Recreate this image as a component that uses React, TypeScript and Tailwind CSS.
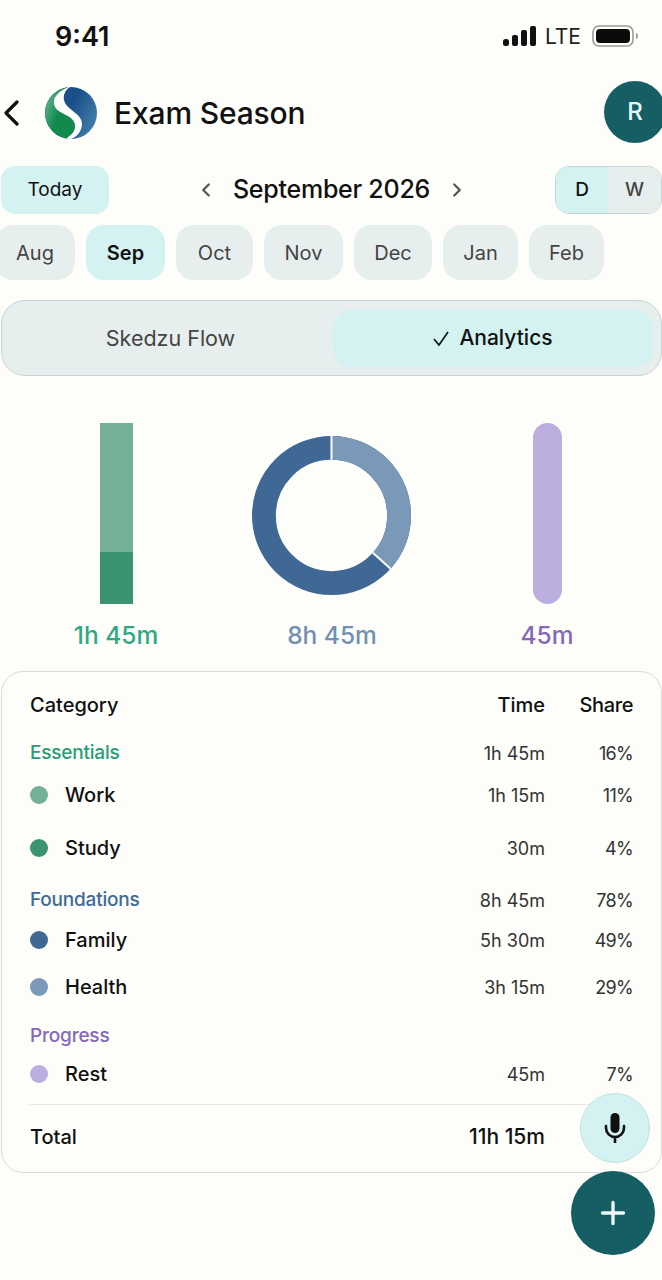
import React from 'react';
import { ChevronLeft, ChevronRight, Plus } from 'lucide-react';

const months = [
  { label: 'Aug', w: 'w-[80px]' },
  { label: 'Sep', w: 'w-[79px]', active: true },
  { label: 'Oct', w: 'w-[77px]' },
  { label: 'Nov', w: 'w-[79px]' },
  { label: 'Dec', w: 'w-[78px]' },
  { label: 'Jan', w: 'w-[75px]' },
  { label: 'Feb', w: 'w-[75px]' },
];

type Row = {
  name: string;
  time?: string;
  share?: string;
  h: string;
  dot?: string;
  heading?: string;
};

const rows: Row[] = [
  { name: 'Essentials', time: '1h 45m', share: '16%', h: 'h-[48px] pt-[2px]', heading: 'text-[#2a9d78]' },
  { name: 'Work', time: '1h 15m', share: '11%', h: 'h-[38px]', dot: 'bg-[#74b097]' },
  { name: 'Study', time: '30m', share: '4%', h: 'h-[68px]', dot: 'bg-[#3a9470]' },
  { name: 'Foundations', time: '8h 45m', share: '78%', h: 'h-[34px] pt-[2px]', heading: 'text-[#3f6a97]' },
  { name: 'Family', time: '5h 30m', share: '49%', h: 'h-[48px]', dot: 'bg-[#3f6994]' },
  { name: 'Health', time: '3h 15m', share: '29%', h: 'h-[46px]', dot: 'bg-[#7a98b8]' },
  { name: 'Progress', h: 'h-[50px] pt-[2px]', heading: 'text-[#8668b8]' },
  { name: 'Rest', time: '45m', share: '7%', h: 'h-[28px]', dot: 'bg-[#bdaee0]' },
];

function Logo() {
  return (
    <svg width="52" height="52" viewBox="0 0 52 52" className="shrink-0">
      <defs>
        <linearGradient id="blue" x1="1" y1="0.5" x2="0.55" y2="0.3">
          <stop offset="0" stopColor="#3f78a6" />
          <stop offset="1" stopColor="#1b4f8a" />
        </linearGradient>
        <linearGradient id="green" x1="0" y1="0.4" x2="0.6" y2="0.8">
          <stop offset="0" stopColor="#55ad80" />
          <stop offset="0.6" stopColor="#128a4e" />
        </linearGradient>
      </defs>
      <circle cx="26" cy="26" r="26" fill="url(#blue)" />
      <path d="M23 .2C12 5 6 12 10 20c3 7 19 8 20 18 .5 6-3 10-9 13.500A26 26 0 0 1 23 .2Z" fill="url(#green)" />
      <path d="M23 .2C12 5 6 12 10 20c3 7 19 8 20 18 .5 6-3 10-9 13.500 1.500.3 3 .5 5 .5 6-2 11-8 11-15 0-11-16-14-18-24-1-5 1-10 6-13-1-.1-2-.2-2-.3Z" fill="#fdfdf9" />
    </svg>
  );
}

function StatusBar() {
  return (
    <div className="flex h-[72px] items-center justify-between pl-[55px] pr-[23px]">
      <span className="mt-[2px] text-[27px] font-semibold text-[#111]">9:41</span>
      <div className="flex items-center gap-[8px]">
        <svg width="34" height="20" viewBox="0 0 34 20" fill="#111">
          <rect x="0" y="13" width="6" height="7" rx="2.5" />
          <rect x="9" y="9" width="6" height="11" rx="2" />
          <rect x="18" y="4" width="6" height="16" rx="2" />
          <rect x="27" y="0" width="6" height="20" rx="2" />
        </svg>
        <span className="mt-[2px] text-[21px] text-[#222]">LTE</span>
        <svg width="47" height="22" viewBox="0 0 47 22" className="ml-[3px]">
          <rect x="1" y="1" width="40" height="20" rx="6" fill="none" stroke="#9a9a96" strokeWidth="1.6" />
          <rect x="4" y="4" width="34" height="14" rx="4" fill="#0b0b0b" />
          <path d="M44 8c1.500.5 2 1.500 2 3s-.5 2.500-2 3Z" fill="#9a9a96" />
        </svg>
      </div>
    </div>
  );
}

export default function App() {
  return (
    <div className="relative h-[1280px] w-[662px] overflow-hidden bg-[#fdfdf9] font-['Inter',sans-serif] text-[#111]">
      <StatusBar />

      <header className="flex h-[82px] items-center">
        <svg width="16" height="26" viewBox="0 0 16 26" className="ml-[3px] shrink-0" fill="none">
          <path d="M14 2L3 13l11 11" stroke="#111" strokeWidth="3.2" strokeLinecap="round" strokeLinejoin="round" />
        </svg>
        <div className="ml-[26px]"><Logo /></div>
        <h1 className="ml-[17px] text-[30px] font-medium tracking-[-0.15px]">Exam Season</h1>
        <div className="ml-auto mt-[-2px] mr-[-4px] flex h-[62px] w-[62px] items-center justify-center rounded-full bg-[#155e63] text-[24px] font-medium text-[#e6f6f5]">
          R
        </div>
      </header>

      <div className="mt-[12px] flex h-[48px] items-center pl-[1px]">
        <button className="h-[48px] w-[108px] rounded-[14px] bg-[#d3f2f1] text-[19px] font-normal">Today</button>
        <div className="flex flex-1 items-center justify-center gap-[16px] pr-[12px] pl-[11px]">
          <ChevronLeft className="h-[22px] w-[22px] text-[#555]" strokeWidth={2.5} />
          <span className="text-[25px] font-medium tracking-[-0.25px]">September 2026</span>
          <ChevronRight className="h-[22px] w-[22px] text-[#555]" strokeWidth={2.5} />
        </div>
        <div className="flex h-[48px] w-[107px] overflow-hidden rounded-[14px] border border-[#c5d5d5] text-[19px] font-medium">
          <div className="flex w-[52px] items-center justify-center bg-[#d3f2f1]">D</div>
          <div className="flex flex-1 items-center justify-center bg-[#e7efee] text-[#444]">W</div>
        </div>
      </div>

      <div className="mt-[11px] ml-[-5px] flex h-[55px] gap-[11px]">
        {months.map((m) => (
          <div
            key={m.label}
            className={`flex shrink-0 items-center justify-center rounded-[18px] text-[20px] ${m.w} ${
              m.active ? 'bg-[#d3f2f1] font-semibold text-[#111]' : 'bg-[#e7efee] text-[#444]'
            }`}
          >
            {m.label}
          </div>
        ))}
      </div>

      <div className="mt-[20px] ml-[1px] flex h-[76px] items-center rounded-[24px] border border-[#c5d5d5] bg-[#e7efee] pr-[8px]">
        <div className="flex-1 pl-[6px] text-center text-[21.5px] font-normal text-[#444]">Skedzu Flow</div>
        <div className="flex h-[57px] w-[320px] items-center justify-center gap-[10px] rounded-[18px] bg-[#d3f2f1] text-[21px] font-medium">
          <svg width="16" height="15" viewBox="0 0 16 15" fill="none">
            <path d="M1 8l5 6L15 1" stroke="#111" strokeWidth="1.7" />
          </svg>
          <span>Analytics</span>
        </div>
      </div>

      <section className="mt-[47px] flex h-[181px]">
        <div className="ml-[100px] flex h-full w-[33px] flex-col">
          <div className="h-[129px] bg-[#74b097]" />
          <div className="flex-1 bg-[#3a9470]" />
        </div>
        <svg width="159" height="159" viewBox="0 0 160 160" className="mt-[13px] ml-[119px]">
          <circle cx="80" cy="80" r="68" fill="none" stroke="#3f6994" strokeWidth="24" />
          <circle
            cx="80"
            cy="80"
            r="68"
            fill="none"
            stroke="#7a98b8"
            strokeWidth="24"
            pathLength="100"
            strokeDasharray="36.7 63.3"
            transform="rotate(-90 80 80)"
          />
          <path d="M80 0V24" stroke="#fdfdf9" strokeWidth="2" />
          <path d="M121.600 117.500L139.400 133.500" stroke="#fdfdf9" strokeWidth="2" />
        </svg>
        <div className="ml-[122px] h-full w-[29px] rounded-full bg-[#bdaee0]" />
      </section>

      <div className="relative mt-[13px] h-[30px] text-[24.500px] font-medium">
        <span className="absolute left-[116px] -translate-x-1/2 text-[#2fa981]">1h 45m</span>
        <span className="absolute left-[332px] -translate-x-1/2 text-[#7290b3]">8h 45m</span>
        <span className="absolute left-[547px] -translate-x-1/2 text-[#8668b8]">45m</span>
      </div>

      <div className="mt-[24px] ml-[1px] h-[502px] rounded-[22px] border border-[#d9ddd9] px-[28px] pt-[10px] text-[20px]">
        <div className="flex h-[46px] items-center font-medium">
          <span className="flex-1">Category</span>
          <span className="w-[100px] text-right">Time</span>
          <span className="w-[88px] text-right tracking-[-0.4px]">Share</span>
        </div>
        {rows.map((r) => (
          <div key={r.name} className={`flex items-center ${r.h}`}>
            <div className="flex flex-1 items-center">
              {r.dot && <span className={`mr-[17px] h-[18px] w-[18px] rounded-full ${r.dot}`} />}
              <span className={r.heading ? `${r.heading} text-[19px] font-medium tracking-[-0.2px]` : 'font-medium'}>{r.name}</span>
            </div>
            <span className="w-[100px] text-right text-[18px] text-[#333]">{r.time}</span>
            <span className="w-[88px] text-right text-[18px] tracking-[-0.7px] text-[#333]">{r.share}</span>
          </div>
        ))}
        <div className="mt-[16px] flex h-[64px] items-center border-t border-[#e6e8e3] font-medium">
          <span className="flex-1">Total</span>
          <span className="w-[100px] text-right text-[21px]">11h 15m</span>
          <span className="w-[88px]" />
        </div>
      </div>

      <button className="absolute top-[1093px] left-[580px] flex h-[70px] w-[70px] items-center justify-center rounded-full border border-[#bfe3e2] bg-[#d3f2f1]">
        <svg width="22" height="30" viewBox="0 0 22 30" fill="none">
          <rect x="6.500" y="0" width="9" height="20" rx="4.500" fill="#111" />
          <path d="M2 13v2a9 9 0 0 0 18 0v-2M11 24v6" stroke="#111" strokeWidth="2.600" strokeLinecap="round" />
        </svg>
      </button>
      <button className="absolute top-[1171px] left-[571px] flex h-[84px] w-[84px] items-center justify-center rounded-full bg-[#155e63]">
        <Plus className="h-[36px] w-[36px] text-[#eefafa]" strokeWidth={2.2} />
      </button>
    </div>
  );
}
